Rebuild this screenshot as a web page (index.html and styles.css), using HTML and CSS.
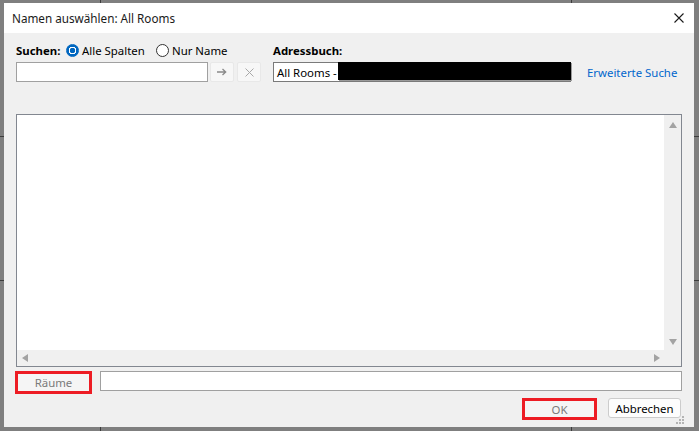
FILE: index.html
```html
<!DOCTYPE html>
<html lang="de">
<head>
    <meta charset="UTF-8">
    <meta name="viewport" content="width=device-width, initial-scale=1.0">
    <title>Namen auswählen: All Rooms</title>
    <link rel="stylesheet" href="styles.css">
</head>
<body>
    <div class="dialog">
        <div class="titlebar">
            <span class="title">Namen auswählen: All Rooms</span>
            <svg class="close" width="10" height="10" viewBox="0 0 10 10">
                <path d="M0.5 0.5 L9.5 9.5 M9.5 0.5 L0.5 9.5" stroke="#1a1a1a" stroke-width="1.1" fill="none"/>
            </svg>
        </div>
        <div class="content">
            <div class="search-grid">
                <div class="label-row">
                    <span class="bold suchen">Suchen:</span>
                    <span class="radio checked"></span>
                    <span class="radio-text first">Alle Spalten</span>
                    <span class="radio"></span>
                    <span class="radio-text">Nur Name</span>
                </div>
                <div class="label-row">
                    <span class="bold">Adressbuch:</span>
                </div>
                <div></div>
                <div class="input-row">
                    <div class="textbox search"></div>
                    <div class="small-btn">
                        <svg width="10" height="8" viewBox="0 0 10 8">
                            <path d="M0 4 H8.5 M5.5 1 L8.7 4 L5.5 7" stroke="#8a8a8a" stroke-width="1.3" fill="none"/>
                        </svg>
                    </div>
                    <div class="small-btn">
                        <svg width="9" height="9" viewBox="0 0 9 9">
                            <path d="M0.5 0.5 L8.5 8.5 M8.5 0.5 L0.5 8.5" stroke="#a8a8a8" stroke-width="1" fill="none"/>
                        </svg>
                    </div>
                </div>
                <div class="textbox book">
                    <span class="book-text">All Rooms -</span>
                    <span class="redacted"></span>
                </div>
                <a class="link">Erweiterte Suche</a>
            </div>

            <div class="listbox">
                <div class="list-area"></div>
                <div class="vscroll">
                    <span class="arrow up"></span>
                    <span class="arrow down"></span>
                </div>
                <div class="hscroll">
                    <span class="arrow left"></span>
                    <span class="arrow right"></span>
                </div>
                <div class="corner"></div>
            </div>

            <div class="pick-row">
                <div class="marked">
                    <div class="btn disabled rooms">Räume</div>
                </div>
                <div class="textbox picked"></div>
            </div>

            <div class="action-row">
                <div class="marked">
                    <div class="btn disabled ok">OK</div>
                </div>
                <div class="btn cancel">Abbrechen</div>
            </div>
        </div>
        <svg class="grip" width="8" height="8" viewBox="0 0 8 8">
            <rect x="6" y="0" width="2" height="2" fill="#b4b4b4"/>
            <rect x="3" y="3" width="2" height="2" fill="#b4b4b4"/>
            <rect x="6" y="3" width="2" height="2" fill="#b4b4b4"/>
            <rect x="0" y="6" width="2" height="2" fill="#b4b4b4"/>
            <rect x="3" y="6" width="2" height="2" fill="#b4b4b4"/>
            <rect x="6" y="6" width="2" height="2" fill="#b4b4b4"/>
        </svg>
    </div>
</body>
</html>
```

FILE: styles.css
```css
body {
    margin: 0;
    width: 699px;
    height: 431px;
    overflow: hidden;
    font-family: "Noto Sans", "Open Sans", sans-serif;
    font-size: 11.4px;
    color: #000000;
    background:
        linear-gradient(#3c3c3c, #3c3c3c) 100px 0 / 1px 100% no-repeat,
        linear-gradient(#3c3c3c, #3c3c3c) 571px 0 / 1px 100% no-repeat,
        linear-gradient(#3c3c3c, #3c3c3c) 0 136px / 100% 1px no-repeat,
        linear-gradient(#3c3c3c, #3c3c3c) 0 280px / 100% 1px no-repeat,
        #7f7f7f;
}
.dialog {
    position: relative;
    margin: 3px 0 0 4px;
    width: 690px;
    height: 424px;
    background-color: #f0f0f0;
    display: flex;
    flex-direction: column;
}
.titlebar {
    height: 30px;
    background-color: #ffffff;
    display: flex;
    align-items: center;
    justify-content: space-between;
    padding: 0 10px 0 8px;
}
.title {
    color: #1a1a1a;
    font-size: 11.7px;
}
.content {
    padding: 9px 12px 0 12px;
    display: flex;
    flex-direction: column;
}
.search-grid {
    display: grid;
    grid-template-columns: 246px 298px auto;
    column-gap: 11px;
    row-gap: 4px;
    align-items: center;
}
.search-grid > :nth-child(2) {
    grid-column: 2;
}
.label-row {
    height: 16px;
    display: flex;
    align-items: center;
}
.bold {
    font-weight: bold;
}
.suchen {
    width: 42px;
}
.radio {
    width: 13px;
    height: 13px;
    box-sizing: border-box;
    border: 1px solid #333333;
    border-radius: 50%;
    background: #ffffff;
    margin-right: 3px;
    flex-shrink: 0;
}
.label-row .suchen + .radio {
    margin-left: 8px;
}
.radio.checked {
    border-color: #0067c0;
    background: radial-gradient(circle, #0067c0 0, #0067c0 2.6px, #ffffff 3px, #ffffff 3.6px, #0067c0 4px);
}
.radio-text {
    white-space: nowrap;
}
.radio-text.first {
    width: 61px;
    margin-right: 13px;
}
.input-row {
    display: flex;
    gap: 3px;
}
.textbox {
    height: 20px;
    box-sizing: border-box;
    background: #ffffff;
    border: 1px solid #a0a0a0;
}
.search {
    width: 192px;
    margin-right: -1px;
}
.small-btn {
    width: 24px;
    height: 20px;
    box-sizing: border-box;
    border: 1px solid #e8e8e8;
    border-radius: 2px;
    background: #f7f7f7;
    display: flex;
    align-items: center;
    justify-content: center;
}
.book {
    display: flex;
    align-items: center;
    border-color: #7a7a7a;
    padding-left: 3px;
}
.book-text {
    white-space: nowrap;
    padding-right: 1px;
}
.redacted {
    flex: 1;
    align-self: stretch;
    margin: -1px -1px 0 0;
    height: 18px;
    background: #000000;
    box-shadow: 1px 1px 0 #9a9a9a;
}
.link {
    margin-left: 5px;
    color: #0066cc;
    white-space: nowrap;
}
.listbox {
    margin-top: 32px;
    height: 253px;
    box-sizing: border-box;
    border: 1px solid #828790;
    display: grid;
    grid-template-columns: 1fr 17px;
    grid-template-rows: 1fr 16px;
    background: #f0f0f0;
}
.list-area {
    background: #ffffff;
}
.vscroll {
    display: flex;
    flex-direction: column;
    justify-content: space-between;
    align-items: center;
    padding: 7px 0 5px 0;
}
.hscroll {
    display: flex;
    justify-content: space-between;
    align-items: center;
    padding: 0 4px 0 5px;
}
.arrow {
    width: 0;
    height: 0;
    border: 4px solid transparent;
}
.up {
    border-bottom: 6px solid #a3a3a3;
    border-top-width: 0;
}
.down {
    border-top: 6px solid #a3a3a3;
    border-bottom-width: 0;
}
.left {
    border-right: 6px solid #a3a3a3;
    border-left-width: 0;
}
.right {
    border-left: 6px solid #a3a3a3;
    border-right-width: 0;
}
.pick-row {
    margin-top: 4px;
    display: flex;
    align-items: flex-start;
    gap: 8px;
}
.marked {
    border: 3px solid #ed1c24;
    display: flex;
}
.pick-row .marked {
    margin-left: -1px;
}
.picked {
    flex: 1;
}
.btn {
    box-sizing: border-box;
    display: flex;
    align-items: center;
    justify-content: center;
    white-space: nowrap;
}
.disabled {
    background: #f5f5f5;
    color: #7a7a7a;
}
.rooms {
    width: 71px;
    height: 17px;
}
.ok {
    width: 69px;
    height: 16px;
}
.action-row {
    margin-top: 4px;
    display: flex;
    justify-content: flex-end;
    align-items: flex-start;
    gap: 11px;
    padding-right: 1px;
}
.cancel {
    width: 73px;
    height: 20px;
    border: 1px solid #cccccc;
    border-radius: 3px;
    background: #fdfdfd;
}
.grip {
    position: absolute;
    right: 10px;
    bottom: 3px;
}
```
